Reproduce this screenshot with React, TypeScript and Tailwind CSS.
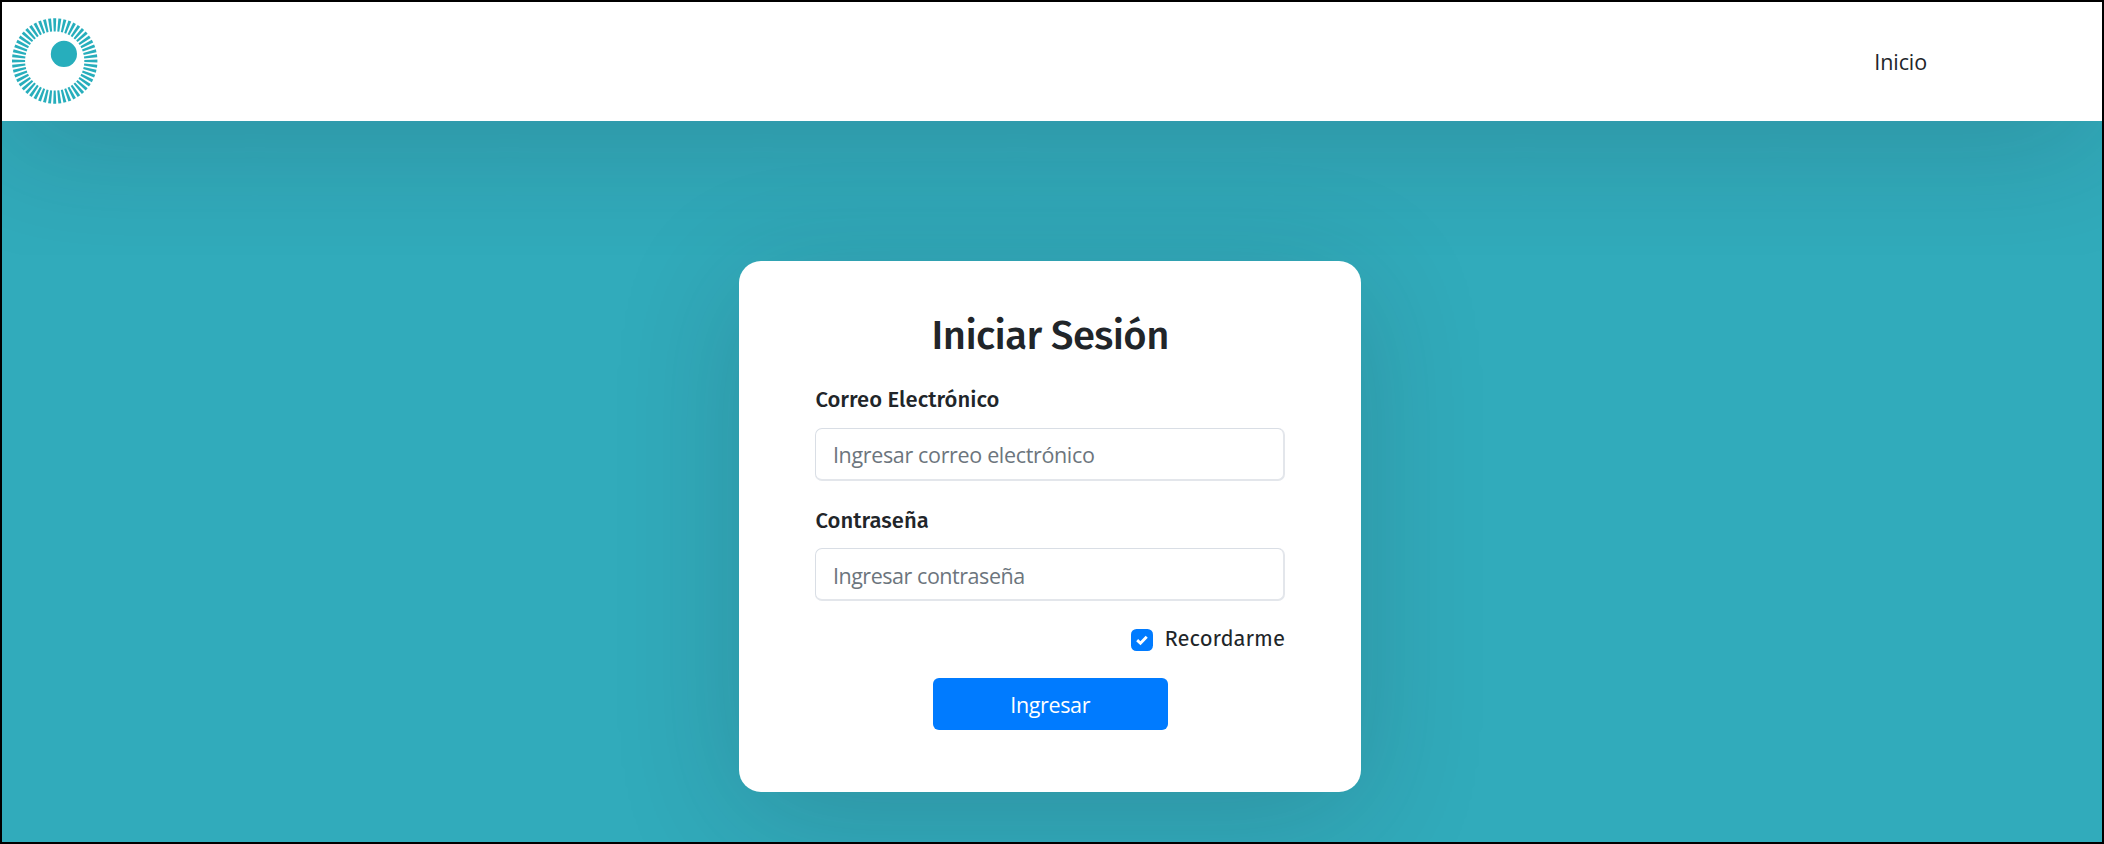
const RAYS = Array.from({ length: 52 }, (_, i) => (i * 360) / 52);

function Logo() {
  return (
    <svg viewBox="-42.7 -43 86 86" className="mb-px h-[86px] w-[86px]" aria-hidden="true">
      {RAYS.map((angle) => (
        <path key={angle} d="M-1 -29.6L-1.5 -42.7H1.5L1 -29.6Z" fill="#27aebc" transform={`rotate(${angle})`} />
      ))}
      <circle cx="9.2" cy="-7.1" r="13.1" fill="#27aebc" />
    </svg>
  );
}

const shadow = "shadow-[0_22px_126px_rgba(40,28,40,0.18)]";
const labelFont = "font-['Fira_Sans','Noto_Sans',sans-serif]";
const inputClass =
  "block h-[53px] w-full rounded-[7px] border border-r-2 border-b-2 border-t-[#d9dee5] border-r-[#e3e6eb] border-b-[#e3e6eb] border-l-[#d9dee5] bg-white pr-[16px] pl-[16.5px] text-[21.5px] text-[#212529] outline-none placeholder:text-[#6c757d] placeholder:opacity-100";

export default function App() {
  return (
    <div className="flex h-[844px] w-full flex-col overflow-hidden border-2 border-black bg-[#31abbb] font-['Open_Sans','Noto_Sans',sans-serif] text-[#212529]">
      <header className={`flex h-[119px] shrink-0 items-center justify-between bg-white pr-[175px] pl-[10px] ${shadow}`}>
        <Logo />
        <nav>
          <a href="#" className="block pt-px text-[21.5px] leading-[32px] tracking-[-0.1px]">Inicio</a>
        </nav>
      </header>

      <main className="flex justify-center pt-[140px] pr-[4px]">
        <form
          className={`flex h-[531px] w-[622px] flex-col rounded-[22px] bg-white pr-[76px] pl-[76.4px] pt-[51px] ${shadow}`}
          onSubmit={(e) => e.preventDefault()}
        >
          <h1 className={`text-center text-[40px] leading-[48px] font-medium tracking-[-0.6px] ${labelFont}`}>
            Iniciar Sesión
          </h1>

          <label htmlFor="email" className={`mt-[24px] text-[22px] leading-[32px] font-medium tracking-[0.03px] ${labelFont}`}>
            Correo Electrónico
          </label>
          <input id="email" type="email" placeholder="Ingresar correo electrónico" className={`${inputClass} mt-[12px] tracking-[-0.34px]`} />

          <label htmlFor="password" className={`mt-[24px] text-[22px] leading-[32px] font-medium tracking-[0.05px] ${labelFont}`}>
            Contraseña
          </label>
          <input id="password" type="password" placeholder="Ingresar contraseña" className={`${inputClass} mt-[11px] pt-[3px] tracking-[-0.46px]`} />

          <label className={`mt-[22px] flex items-center justify-end gap-[12px] text-[22px] leading-[32px] tracking-[0.03px] ${labelFont}`}>
            <span className="mt-px flex size-[22px] items-center justify-center rounded-[5.5px] bg-[#007bff]">
              <svg viewBox="0 0 20 20" className="size-[22px]" fill="none" stroke="#fff" strokeWidth="2.6">
                <path d="m5.6 10.1 3 2.8 5.7-5.9" />
              </svg>
            </span>
            Recordarme
          </label>

          <button type="submit" className="mt-[23px] h-[52px] w-[235px] self-center rounded-[6px] bg-[#007bff] pt-[2px] text-[21.5px] tracking-[-0.35px] text-white">
            Ingresar
          </button>
        </form>
      </main>
    </div>
  );
}
